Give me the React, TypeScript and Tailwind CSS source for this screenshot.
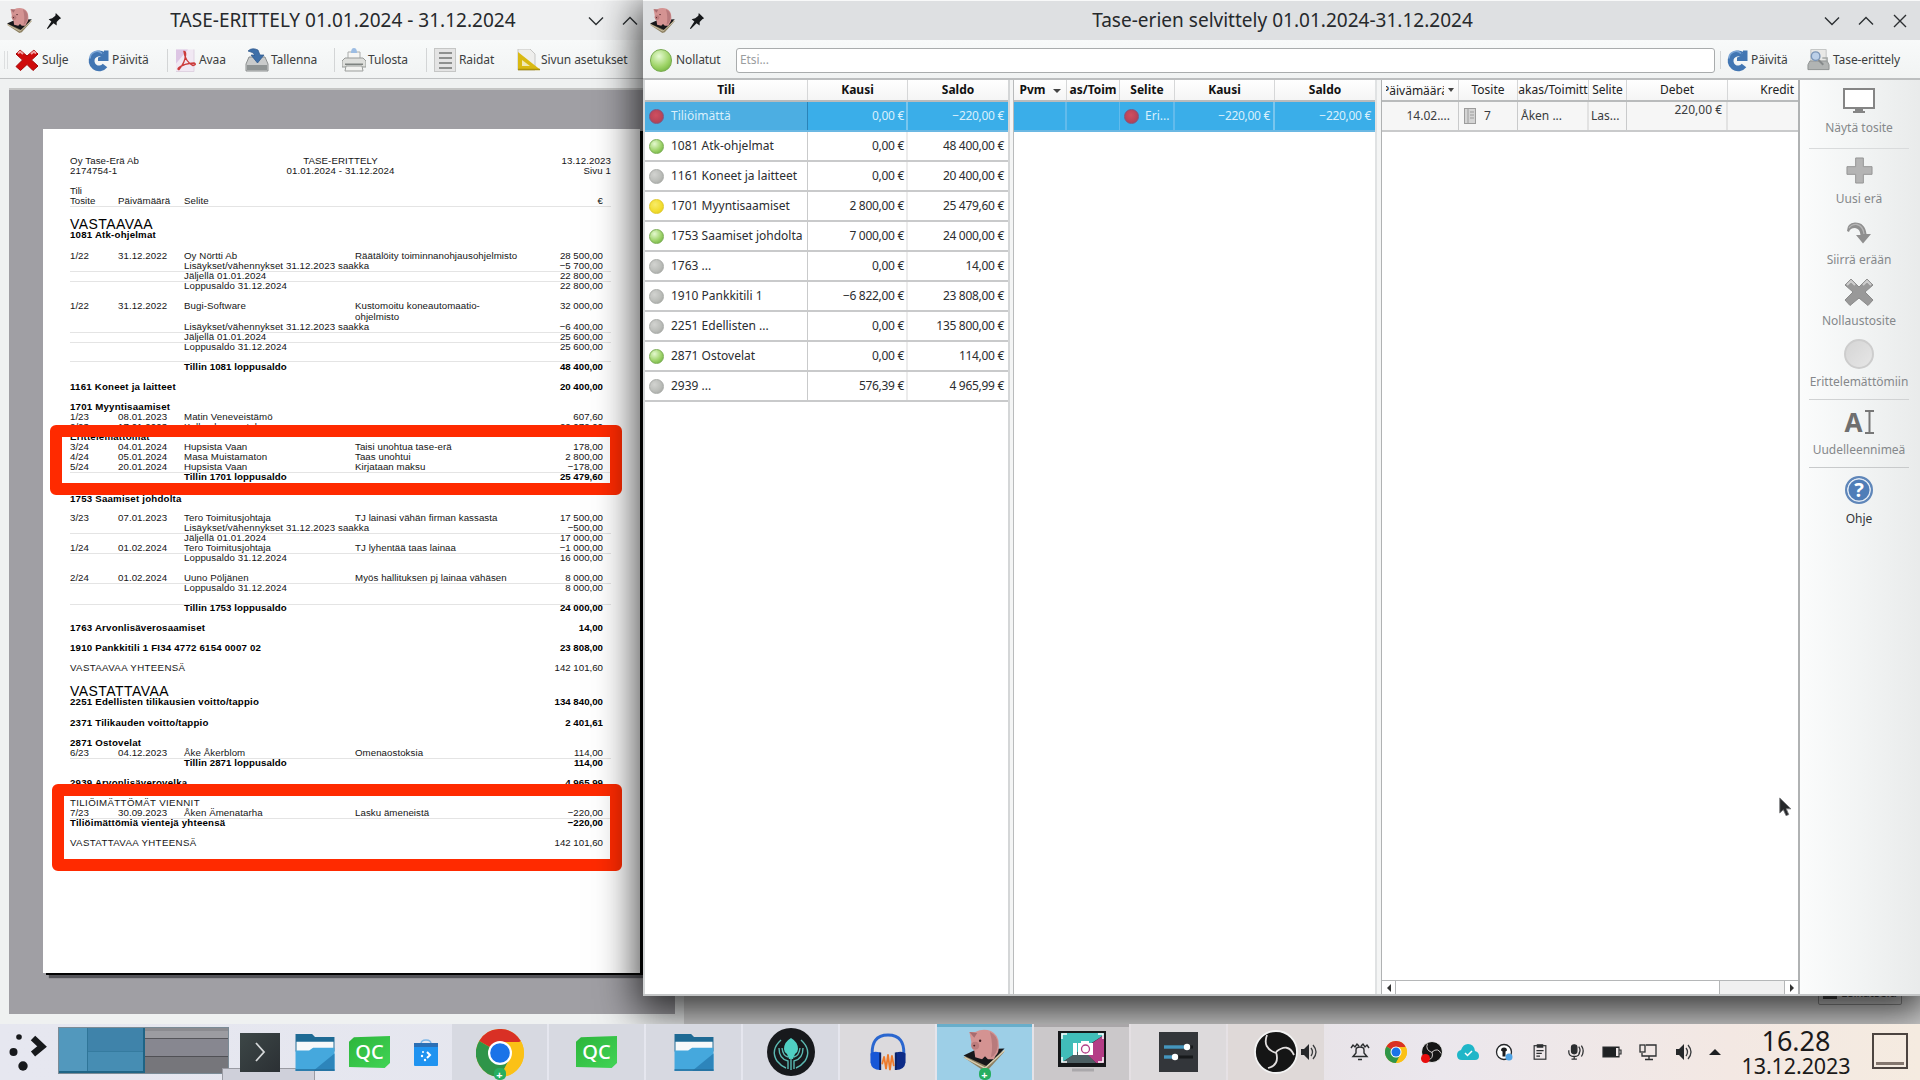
import React from "react";

type Cells = {
  y: number;
  a?: string;
  d?: string;
  s?: string;
  e?: string;
  n?: string;
  bold?: boolean;
  big?: boolean;
  line?: boolean;
};

const LIS = "Lisäykset/vähennykset 31.12.2023 saakka";
const DOC: Cells[] = [
  { y: 191, a: "Tili", },
  { y: 201.5, a: "Tosite", d: "Päivämäärä", s: "Selite", n: "€", line: true },
  { y: 224, a: "VASTAAVAA", big: true },
  { y: 235, a: "1081 Atk-ohjelmat", bold: true },
  { y: 256, a: "1/22", d: "31.12.2022", s: "Oy Nörtti Ab", e: "Räätälöity toiminnanohjausohjelmisto", n: "28 500,00" },
  { y: 266.5, s: LIS, n: "−5 700,00", line: true },
  { y: 276.5, s: "Jäljellä 01.01.2024", n: "22 800,00", line: true },
  { y: 286.5, s: "Loppusaldo 31.12.2024", n: "22 800,00" },
  { y: 306.5, a: "1/22", d: "31.12.2022", s: "Bugi-Software", e: "Kustomoitu koneautomaatio-", n: "32 000,00" },
  { y: 317, e: "ohjelmisto" },
  { y: 327, s: LIS, n: "−6 400,00", line: true },
  { y: 337, s: "Jäljellä 01.01.2024", n: "25 600,00", line: true },
  { y: 347.5, s: "Loppusaldo 31.12.2024", n: "25 600,00" },
  { y: 356.5, line: true },
  { y: 367.5, s: "Tillin 1081 loppusaldo", n: "48 400,00", bold: true },
  { y: 387, a: "1161 Koneet ja laitteet", n: "20 400,00", bold: true },
  { y: 407, a: "1701 Myyntisaamiset", bold: true },
  { y: 417.5, a: "1/23", d: "08.01.2023", s: "Matin Veneveistämö", n: "607,60" },
  { y: 427, a: "2/23", d: "17.01.2023", s: "Kallen kauppatalos", n: "22 072,00" },
  { y: 437, a: "Erittelemättömät", bold: true },
  { y: 447.5, a: "3/24", d: "04.01.2024", s: "Hupsista Vaan", e: "Taisi unohtua tase-erä", n: "178,00" },
  { y: 457.5, a: "4/24", d: "05.01.2024", s: "Masa Muistamaton", e: "Taas unohtui", n: "2 800,00" },
  { y: 467.5, a: "5/24", d: "20.01.2024", s: "Hupsista Vaan", e: "Kirjataan maksu", n: "−178,00", line: true },
  { y: 477.5, s: "Tillin 1701 loppusaldo", n: "25 479,60", bold: true },
  { y: 499, a: "1753 Saamiset johdolta", bold: true },
  { y: 518.5, a: "3/23", d: "07.01.2023", s: "Tero Toimitusjohtaja", e: "TJ lainasi vähän firman kassasta", n: "17 500,00" },
  { y: 528.5, s: LIS, n: "−500,00", line: true },
  { y: 538.5, s: "Jäljellä 01.01.2024", n: "17 000,00" },
  { y: 548.5, a: "1/24", d: "01.02.2024", s: "Tero Toimitusjohtaja", e: "TJ lyhentää taas lainaa", n: "−1 000,00", line: true },
  { y: 558.5, s: "Loppusaldo 31.12.2024", n: "16 000,00" },
  { y: 578, a: "2/24", d: "01.02.2024", s: "Uuno Pöljänen", e: "Myös hallituksen pj lainaa vähäsen", n: "8 000,00", line: true },
  { y: 588.5, s: "Loppusaldo 31.12.2024", n: "8 000,00" },
  { y: 599, line: true },
  { y: 608.5, s: "Tillin 1753 loppusaldo", n: "24 000,00", bold: true },
  { y: 628, a: "1763 Arvonlisäverosaamiset", n: "14,00", bold: true },
  { y: 648.5, a: "1910 Pankkitili 1 FI34 4772 6154 0007 02", n: "23 808,00", bold: true },
  { y: 668.5, a: "VASTAAVAA YHTEENSÄ", n: "142 101,60" },
  { y: 691, a: "VASTATTAVAA", big: true },
  { y: 702.5, a: "2251 Edellisten tilikausien voitto/tappio", n: "134 840,00", bold: true },
  { y: 723.5, a: "2371 Tilikauden voitto/tappio", n: "2 401,61", bold: true },
  { y: 743.5, a: "2871 Ostovelat", bold: true },
  { y: 753.5, a: "6/23", d: "04.12.2023", s: "Åke Åkerblom", e: "Omenaostoksia", n: "114,00", line: true },
  { y: 763.5, s: "Tillin 2871 loppusaldo", n: "114,00", bold: true },
  { y: 783, a: "2939 Arvonlisäverovelka", n: "4 965,99", bold: true },
  { y: 803, a: "TILIÖIMÄTTÖMÄT VIENNIT" },
  { y: 813.5, a: "7/23", d: "30.09.2023", s: "Åken Ämenatarha", e: "Lasku ämeneistä", n: "−220,00", line: true },
  { y: 823.5, a: "Tiliöimättömiä vientejä yhteensä", n: "−220,00", bold: true },
  { y: 843.5, a: "VASTATTAVAA YHTEENSÄ", n: "142 101,60" },
];

function DocRows() {
  let prev = 186;
  return (
    <>
      {DOC.map((r, i) => {
        const h = r.y + 5 - prev;
        prev = r.y + 5;
        const look = r.bold ? "font-bold text-black" : "text-[#151515]";
        const first = r.big
          ? "text-[14px] tracking-[0.45px] text-black"
          : r.bold
            ? "tracking-[0.2px]"
            : r.a && r.a.length > 8
              ? "tracking-[0.36px]"
              : "";
        return (
          <div key={i} className={`flex w-[541px] items-end border-b ${r.line ? "border-[#e4e4e4]" : "border-transparent"}`} style={{ height: h }}>
            <div className={`flex h-[10px] w-[533px] items-center whitespace-nowrap ${look}`}>
              <span className={`w-[48px] shrink-0 ${first}`}>{r.a}</span>
              <span className="w-[66px] shrink-0 tracking-[0.06px]">{r.d}</span>
              <span className="w-[171px] shrink-0 tracking-[0.08px]">{r.s}</span>
              <span className="w-0 grow tracking-[0.06px]">{r.e}</span>
              <span>{r.n}</span>
            </div>
          </div>
        );
      })}
    </>
  );
}

function Piggy({ c }: { c: string }) {
  return (
    <svg viewBox="0 0 44 44" className={c}>
      <path d="M0 29 L14 24 L42 23 L25 42 L21 43 Z" fill="#8d8062" />
      <path d="M0 27 L13 21 L42 20 L24 38 Z" fill="#17171a" />
      <path d="M1 29 L22 40 L42 22" fill="none" stroke="#d8cdb0" strokeWidth="1.4" />
      <path d="M6 3 L12 3 Q20 -1 28 2 Q36 6 36 15 Q37 23 33 27 L31 31 L25 31 L22 28 L19 31 L12 29 L11 22 Q7 19 8 13 Z" fill="#d49392" />
      <path d="M27 3 Q36 7 35 17 Q34 27 28 29 Q31 17 27 3Z" fill="#b87a7c" />
      <ellipse cx="12" cy="17" rx="4" ry="4" fill="#bd7d7d" />
      <circle cx="11" cy="17" r="1" fill="#4a2226" />
      <circle cx="17" cy="12" r="1.2" fill="#39191e" />
      <path d="M6 3 L14 4 L11 9Z" fill="#a76c70" />
    </svg>
  );
}

function Pin() {
  return (
    <svg viewBox="0 0 16 18" className="h-[16px] w-[16px]">
      <path d="M10 0 L16 6 L14 7 L11 10 L11 14 L7.5 11.5 L1 18 L0 17.5 L5 9.5 L2 7 L6 6 L9.5 3Z" fill="#16181a" />
    </svg>
  );
}

function Chev({ up, x }: { up?: boolean; x?: boolean }) {
  return (
    <svg viewBox="0 0 16 16" className="h-4 w-4" fill="none" stroke="#2c2f32" strokeWidth="1.4">
      {x ? <path d="M2 2L14 14M14 2L2 14" /> : up ? <path d="M1 11.5L8 4.5L15 11.5" /> : <path d="M1 4.5L8 11.5L15 4.5" />}
    </svg>
  );
}

function RedX() {
  return (
    <svg viewBox="0 0 24 22" className="h-[22px] w-[24px]">
      <path d="M5 1 L12 7 L19 1 L23 5 L16.5 11 L23 17 L18 21.500 L12 15.500 L5.500 21.500 L1 17.500 L7.500 11 L1 5Z" fill="#cf0a0a" stroke="#a30505" strokeLinejoin="round" />
      <path d="M3 4.500 L5 2.500 L8 5 M16 5 L19 2.500 L21 4.500" stroke="#f0a0a0" strokeWidth="2" fill="none" />
    </svg>
  );
}

function Refresh() {
  return (
    <svg viewBox="0 0 22 22" className="h-[23px] w-[22px] shrink-0">
      <path d="M16 5 A7.500 7.500 0 1 0 18 16" fill="none" stroke="#4276b3" strokeWidth="5.800" />
      <path d="M21.500 1 V11.500 H11 V8 L14 7 L17 3 V1Z" fill="#4276b3" />
      <path d="M15 4 A7 7 0 0 0 3 9" fill="none" stroke="#7ba5d6" strokeWidth="1.6" />
    </svg>
  );
}

function Pdf() {
  return (
    <svg viewBox="0 0 20 22" className="h-[23px] w-[20px]">
      <path d="M0 0H18V22H0Z" fill="#f1e8f3" />
      <path d="M0 0H12L0 14Z" fill="#ddc6e4" />
      <path d="M18 0V22H0" fill="none" stroke="#dfd3e1" />
      <path d="M8 2 Q10 2 9.500 6 Q9 13 3 20 Q1 20 3 18 Q8 14 18 13.500 Q21 15 17 16 Q9 12 8 2Z" fill="none" stroke="#cc3b3b" strokeWidth="1.4" />
    </svg>
  );
}

function SaveIcon() {
  return (
    <svg viewBox="0 0 24 24" className="h-[24px] w-[24px]">
      <path d="M4 9H20L23 16V23H1V16Z" fill="#c9cbcb" stroke="#8b8f8f" />
      <rect x="2" y="17" width="20" height="5" fill="#8f9494" />
      <path d="M3 3 Q7 -1 13 2 L15 7 H19 L12.500 15 L6 7 H10 Q8 4 3 3Z" fill="#3e6fa8" stroke="#2d5689" strokeWidth=".7" />
    </svg>
  );
}

function PrinterIcon() {
  return (
    <svg viewBox="0 0 24 24" className="h-[24px] w-[24px]">
      <path d="M6 4H18V12H6Z" fill="#f6f6f4" stroke="#a9acab" />
      <path d="M9 5Q9 0 12 0T15 5Z" fill="#9dbde3" />
      <path d="M3 10H21L24 13V19H0V13Z" fill="#dedfdc" stroke="#979a98" />
      <path d="M3 15.500H21V17H3Z" fill="#7e8280" />
      <path d="M4 18H20L21 23H3Z" fill="#f2f2f0" stroke="#9b9e9c" />
    </svg>
  );
}

function Stripes() {
  return (
    <svg viewBox="0 0 22 24" className="h-[24px] w-[22px]">
      <rect x=".5" y=".5" width="21" height="23" fill="#e4e4e4" stroke="#c5c6c5" />
      <path d="M5 5H18M5 10H18M5 15H18M5 20H18" stroke="#8e908f" strokeWidth="2.200" />
    </svg>
  );
}

function Ruler() {
  return (
    <svg viewBox="0 0 23 22" className="h-[22px] w-[23px]">
      <path d="M1 0H13L18 5V21H1Z" fill="#eeeeec" stroke="#c6c6c4" />
      <path d="M1 3 L23 20.500 H1Z" fill="#d9b912" />
      <path d="M5 11 L13 17 H5Z" fill="#f0e9b4" />
      <path d="M1 20.500H23" stroke="#ad920a" strokeWidth="1.500" />
    </svg>
  );
}

function DiskSearch() {
  return (
    <svg viewBox="0 0 24 22" className="h-[22px] w-[23px] shrink-0">
      <path d="M4 0H20V14H4Z" fill="#e8e8e6" stroke="#c0c2c1" />
      <path d="M3 12H21L23 16V21H1V16Z" fill="#b1b4b3" stroke="#8d9190" />
      <circle cx="9" cy="7" r="4.500" fill="#bcd0e8" stroke="#7d97b8" strokeWidth="1.500" />
      <path d="M12 11L17 16" stroke="#85898a" strokeWidth="2" />
      <path d="M16 9H21V14" stroke="#a2a6a5" fill="none" strokeWidth="1.500" />
    </svg>
  );
}

const BALL: Record<string, string> = {
  green: "bg-[radial-gradient(circle_at_35%_30%,#e4f8cf,#a4d672_50%,#62a92f)] border-[#7cae55]",
  grey: "bg-[radial-gradient(circle_at_35%_35%,#d2d3d0,#bbbdb9_55%,#9fa19e)] border-[#a9aba8]",
  yellow: "bg-[radial-gradient(circle_at_40%_35%,#f8ec6a,#f1dc2c_60%,#dcc41c)] border-[#dfc92b]",
  red: "bg-[radial-gradient(circle_at_45%_40%,#cf4f60,#b84458_60%,#8e4566)] border-[#87527a]",
};

function Ball({ c }: { c: string }) {
  return <span className={`inline-block h-[15px] w-[15px] shrink-0 rounded-full border ${BALL[c]}`} />;
}

function TitleBar({ title, active }: { title: string; active?: boolean }) {
  return (
    <div className={`flex h-10 shrink-0 items-center border-t border-[#f8f9f9] ${active ? "bg-[#dee0e2] pl-[7px] pr-[12px]" : "bg-[#eff0f1] pl-[7px] pr-[12px]"}`}>
      <Piggy c="h-[27px] w-[26px] shrink-0" />
      <div className="ml-[13px]"><Pin /></div>
      <div className={`grow whitespace-nowrap text-center text-[19.05px] text-[#26292c] ${active ? "pl-[36px]" : "pl-[36px]"}`}>{title}</div>
      <div className="flex items-center gap-[18px]">
        <Chev /><Chev up />{active ? <Chev x /> : <span className="w-[16px]" />}
      </div>
    </div>
  );
}

function Tool({ icon, label, c }: { icon: React.ReactNode; label: string; c: string }) {
  return (
    <div className={`flex shrink-0 items-center gap-[3px] whitespace-nowrap ${c}`}>
      {icon}<span>{label}</span>
    </div>
  );
}

function LeftWindow() {
  return (
    <div className="relative flex h-[1024px] w-[684px] flex-col bg-[#eff1f1]">
      <TitleBar title="TASE-ERITTELY 01.01.2024 - 31.12.2024" />
      <div className="flex h-[39px] shrink-0 items-center border-b border-[#bfc1c2] bg-gradient-to-b from-[#f8fafa] to-[#f1f3f3] pl-1 pt-[2px] text-[12px] tracking-[-0.1px] text-[#3c3e40]">
        <div className="h-[18px] w-[4px] border-x border-[#dcdedf]" />
        <Tool icon={<RedX />} label="Sulje" c="w-[71px] pl-[7px]" />
        <Tool icon={<Refresh />} label="Päivitä" c="w-[88px] pl-[8px]" />
        <Tool icon={<Pdf />} label="Avaa" c="w-[69px] border-l border-[#d3d5d6] pl-[8px]" />
        <Tool icon={<SaveIcon />} label="Tallenna" c="w-[98px] pl-[9px] !gap-[2px]" />
        <Tool icon={<PrinterIcon />} label="Tulosta" c="w-[92px] border-l border-[#d3d5d6] pl-[7px] !gap-[2px]" />
        <Tool icon={<Stripes />} label="Raidat" c="w-[80px] border-l border-[#d3d5d6] pl-[7px]" />
        <Tool icon={<Ruler />} label="Sivun asetukset" c="pl-[11px] !gap-[1px]" />
      </div>
      <div className="ml-[9px] mt-[9px] h-[926px] w-[666px] border-t-2 border-[#c4c5c4] bg-[#a09fa4] pl-[34px] pt-[39px]">
        <div className="h-[844px] w-[597px] bg-white pl-[27px] pt-[27px] font-['Liberation_Sans'] text-[9.7px] leading-[10px] shadow-[3px_2px_0_#050505,6px_5px_1px_#55555a]">
          <div className="flex h-[21px] w-[541px] justify-between whitespace-pre text-[#151515]">
            <div className="w-[180px] tracking-[0.1px]">{"Oy Tase-Erä Ab\n2174754-1"}</div>
            <div className="text-center tracking-[0.1px]">{"TASE-ERITTELY\n01.01.2024 - 31.12.2024"}</div>
            <div className="w-[180px] text-right tracking-[0.1px]">{"13.12.2023\nSivu 1"}</div>
          </div>
          <div className="pt-[9.500px]"><DocRows /></div>
        </div>
      </div>
      <div className="absolute left-[50px] top-[425px] h-[70px] w-[572px] rounded-[6px] border-[12px] border-[#ff2a00]" />
      <div className="absolute left-[52px] top-[784px] h-[87px] w-[570px] rounded-[6px] border-[12px] border-[#ff2a00]" />
    </div>
  );
}

const ACC = [
  ["red", "Tiliöimättä", "0,00 €", "−220,00 €"],
  ["green", "1081 Atk-ohjelmat", "0,00 €", "48 400,00 €"],
  ["grey", "1161 Koneet ja laitteet", "0,00 €", "20 400,00 €"],
  ["yellow", "1701 Myyntisaamiset", "2 800,00 €", "25 479,60 €"],
  ["green", "1753 Saamiset johdolta", "7 000,00 €", "24 000,00 €"],
  ["grey", "1763 ...", "0,00 €", "14,00 €"],
  ["grey", "1910 Pankkitili 1", "−6 822,00 €", "23 808,00 €"],
  ["grey", "2251 Edellisten ...", "0,00 €", "135 800,00 €"],
  ["green", "2871 Ostovelat", "0,00 €", "114,00 €"],
  ["grey", "2939 ...", "576,39 €", "4 965,99 €"],
];

const HEAD = "grid h-[22px] shrink-0 items-end border-b-2 border-[#b9bbbc] bg-gradient-to-b from-white to-[#f5f5f5] text-center text-[12px] leading-[19px]";
const HC = "h-[20px] overflow-hidden whitespace-nowrap border-r border-[#d6d7d8]";

function AccountTable() {
  return (
    <div className="flex w-[365px] shrink-0 flex-col border-l-2 border-[#d4d6d7] bg-white">
      <div className={`${HEAD} grid-cols-[163px_100px_100px] font-bold text-[#111]`}>
        <div className={HC}>Tili</div><div className={HC}>Kausi</div><div className="h-[20px]">Saldo</div>
      </div>
      {ACC.map((r, i) => (
        <div key={i} className={`grid h-[30px] shrink-0 grid-cols-[163px_100px_100px] items-stretch whitespace-nowrap border-b-2 text-[12px] leading-[28px] ${i === 0 ? "border-[#6bb8e3] bg-[#3aaee9] text-[#d9f0fc]" : "border-[#c9cacb] text-[#2b2d30]"}`}>
          <div className={`flex items-center gap-[7px] border-r pl-[4px] ${i === 0 ? "border-[#2a83b8] bg-[#4caee2]" : "border-[#c9cacb]"}`}><Ball c={r[0]} />{r[1]}</div>
          <div className={`border-r-2 pr-[2px] text-right tracking-[-0.3px] ${i === 0 ? "border-[#79c6ee]" : "border-[#ececec]"}`}>{r[2]}</div>
          <div className="pr-[4px] text-right tracking-[-0.3px]">{r[3]}</div>
        </div>
      ))}
    </div>
  );
}

function ItemTable() {
  const cols = "grid-cols-[53px_53px_55px_100px_100px]";
  return (
    <div className="flex w-[362px] shrink-0 flex-col border-l border-[#b9bbbc] bg-white">
      <div className={`${HEAD} ${cols} font-bold text-[#111]`}>
        <div className={HC}>Pvm <span className="ml-1 inline-block border-x-[4px] border-t-[4px] border-x-transparent border-t-[#444] align-middle" /></div>
        <div className={HC}>as/Toim</div><div className={HC}>Selite</div><div className={HC}>Kausi</div><div className="h-[20px]">Saldo</div>
      </div>
      <div className={`grid h-[30px] ${cols} whitespace-nowrap border-b-2 border-[#6bb8e3] bg-[#3aaee9] text-[12px] leading-[28px] text-[#d9f0fc]`}>
        <div className="border-r-2 border-[#62bbec]" /><div className="border-r border-[#62bbec]" />
        <div className="flex items-center gap-[6px] border-r-2 border-[#62bbec] pl-[4px]"><Ball c="red" />Eri...</div>
        <div className="border-r-2 border-[#79c6ee] pr-[3px] text-right tracking-[-0.3px]">−220,00 €</div>
        <div className="pr-[4px] text-right tracking-[-0.3px]">−220,00 €</div>
      </div>
    </div>
  );
}

function EntryTable() {
  const cols = "grid-cols-[77px_59px_71px_38px_101px_71px]";
  return (
    <div className="flex w-[419px] shrink-0 flex-col border-l border-r-2 border-[#b0b2b3] bg-white">
      <div className={`${HEAD} ${cols} text-[#222]`}>
        <div className={`${HC} flex items-center justify-center gap-1`}>
          <span className="flex w-[58px] justify-center overflow-hidden">Päivämäärä</span><span className="border-x-[3.500px] border-t-[4px] border-x-transparent border-t-[#444]" />
        </div>
        <div className={HC}>Tosite</div>
        <div className={`${HC} flex justify-center`}><span>akas/Toimitt</span></div>
        <div className={HC}>Selite</div><div className={HC}>Debet</div><div className="h-[20px] pr-[5px] text-right">Kredit</div>
      </div>
      <div className={`grid h-[30px] ${cols} whitespace-nowrap border-b-2 border-[#c9cacb] bg-[#f6f6f6] text-[12px] leading-[28px] text-[#3a3c3e]`}>
        <div className="border-r border-[#c9cacb] pr-[8px] text-right">14.02....</div>
        <div className="flex items-center gap-[8px] border-r border-[#c9cacb] pl-[5px]">
          <svg viewBox="0 0 12 16" className="h-[16px] w-[12px]"><rect x=".5" y=".5" width="11" height="15" fill="#d4d4d4" stroke="#9c9c9c" /><path d="M4 1V15M6 4H10M6 7H10M6 10H10" stroke="#9c9c9c" /></svg>7
        </div>
        <div className="border-r-2 border-[#e2e2e2] pl-[3px]">Åken ...</div>
        <div className="border-r border-[#c9cacb] pl-[2px]">Las...</div>
        <div className="border-r-2 border-[#e2e2e2] pr-[4px] text-right leading-[15px]">220,00 €</div>
        <div />
      </div>
      <div className="grow" />
      <div className="flex h-[14px] shrink-0 items-stretch border-t border-[#b5b7b8]">
        <div className="flex w-[14px] items-center justify-center border-r border-[#b5b7b8]"><span className="border-y-[4px] border-r-[4px] border-y-transparent border-r-[#333]" /></div>
        <div className="grow border-r border-[#b5b7b8]" />
        <div className="w-[65px] border-r border-[#b5b7b8] bg-[#f0f0f0]" />
        <div className="flex w-[13px] items-center justify-center"><span className="border-y-[4px] border-l-[4px] border-y-transparent border-l-[#333]" /></div>
      </div>
    </div>
  );
}

function SideItem({ icon, label, h, dark }: { icon: React.ReactNode; label: string; h: string; dark?: boolean }) {
  return (
    <div className={`flex w-full flex-col items-center justify-end text-[12px] leading-[16px] ${h} ${dark ? "text-[#33363a]" : "text-[#85888b]"}`}>
      <div className="flex grow items-center">{icon}</div>
      <span className="whitespace-nowrap">{label}</span>
    </div>
  );
}

function Sidebar() {
  return (
    <div className="flex w-[120px] shrink-0 flex-col items-center bg-gradient-to-r from-[#fbfcfc] via-[#f2f4f4] to-[#e9ebeb] pr-[2px]">
      <SideItem h="h-[56px]" label="Näytä tosite" icon={
        <svg viewBox="0 0 32 25" className="h-[25px] w-[32px]"><rect x="1" y="1" width="30" height="19" fill="#fff" stroke="#858585" strokeWidth="2" /><path d="M12 21H20V23H22V25H10V23H12Z" fill="#858585" /></svg>} />
      <div className="mt-[12px] h-px w-[100px] bg-[#d9dbdc]" />
      <SideItem h="h-[58px]" label="Uusi erä" icon={
        <svg viewBox="0 0 28 28" className="h-[27px] w-[27px]"><path d="M10 1H18V10H27V18H18V27H10V18H1V10H10Z" fill="#b4b4b4" stroke="#949494" /></svg>} />
      <SideItem h="h-[61px]" label="Siirrä erään" icon={
        <svg viewBox="0 0 26 22" className="mt-[6px] h-[22px] w-[26px]"><path d="M1 9Q1 1 9 0.500Q19 0.500 20.500 12H25L17 21.500L10 13H14.500Q14 6.500 9 6Q4 6 3 10Z" fill="#8f8f8f" /><path d="M3 6Q6 2 11 2.500Q17 4 18 12" fill="none" stroke="#b5b5b5" strokeWidth="1.300" /></svg>} />
      <SideItem h="h-[61px]" label="Nollaustosite" icon={
        <svg viewBox="0 0 30 28" className="mt-[3px] h-[28px] w-[30px]"><path d="M7 1L15 9L23 1L29 7L21 14L29 22L24 27.500L15 20L6 27.500L1 22L9 14L1 7Z" fill="#999" stroke="#8a8a8a" strokeLinejoin="round" /><path d="M3 7L7 3L11 7M19 7L23 3L27 7" stroke="#cdcdcd" fill="none" strokeWidth="2" /></svg>} />
      <SideItem h="h-[61px]" label="Erittelemättömiin" icon={<span className="mt-[4px] h-[30px] w-[30px] rounded-full border-2 border-[#cdcdcd] bg-gradient-to-br from-[#d5d5d5] to-[#e6e6e6]" />} />
      <div className="mt-[9px] h-px w-[100px] bg-[#d0d2d3]" />
      <SideItem h="h-[58px]" label="Uudelleennimeä" icon={
        <div className="flex items-center gap-[2px] pt-[2px] text-[#6f6f6f]"><span className="text-[26px] font-bold leading-[24px]">A</span><svg viewBox="0 0 9 24" className="h-[24px] w-[9px]"><path d="M0 1H9M4.500 1V23M0 23H9" stroke="#777" strokeWidth="2" /></svg></div>} />
      <div className="mt-[9px] h-px w-[100px] bg-[#c8cacb]" />
      <SideItem dark h="h-[59px]" label="Ohje" icon={<span className="flex h-[28px] w-[28px] items-center justify-center rounded-full border-2 border-[#5f86b9] bg-[#4f7db8] text-[20px] font-bold text-white shadow-[inset_0_0_0_1.500px_#dfe8f3]">?</span>} />
    </div>
  );
}

function RightWindow() {
  return (
    <div className="absolute left-[643px] top-0 flex h-[996px] w-[1277px] flex-col bg-[#eff1f1] shadow-[0_10px_38px_6px_rgba(0,0,0,0.75)]">
      <TitleBar active title="Tase-erien selvittely 01.01.2024-31.12.2024" />
      <div className="flex h-[40px] shrink-0 items-center border-b-2 border-[#bcbebf] bg-gradient-to-b from-[#f8fafa] to-[#f1f3f3] pl-[7px] pt-[2px] text-[12px] tracking-[-0.1px] text-[#3c3e40]">
        <span className="mr-1 h-[23px] w-[22px] shrink-0 rounded-full border border-[#79ab52] bg-[radial-gradient(circle_at_40%_30%,#e6fad2,#9fd468_55%,#62a92f)]" />
        <span className="w-[60px] shrink-0">Nollatut</span>
        <div className="h-[25px] w-[979px] shrink-0 rounded-[3px] border border-[#a9acad] bg-white pl-[3px] leading-[22px] text-[#9b9d9f]">Etsi...</div>
        <div className="ml-[5px] h-[18px] w-px bg-[#d3d5d6]" />
        <Tool icon={<Refresh />} label="Päivitä" c="w-[86px] pl-[5px]" />
        <Tool icon={<DiskSearch />} label="Tase-erittely" c="" />
      </div>
      <div className="flex grow border-b-2 border-[#c3c5c6]">
        <AccountTable />
        <div className="w-[5px] shrink-0 border-l-2 border-[#d4d6d7] bg-[#f4f5f5]" />
        <ItemTable />
        <div className="w-[6px] shrink-0 border-l-2 border-[#e0e2e3] bg-[#f4f5f5]" />
        <EntryTable />
        <Sidebar />
      </div>
    </div>
  );
}

function ChromeLogo({ c }: { c: string }) {
  return (
    <svg viewBox="0 0 48 48" className={c}>
      <circle cx="24" cy="24" r="24" fill="#fbc116" />
      <path d="M24 24L3.200 12A24 24 0 0 1 44.800 12Z" fill="#d93025" />
      <path d="M24 24L3.200 12A24 24 0 0 0 24 48L34 30Z" fill="#2f9549" />
      <path d="M24 13H45.300A24 24 0 0 1 24 48L33.500 29.500Z" fill="#fbc116" />
      <circle cx="24" cy="24" r="12" fill="#fff" />
      <circle cx="24" cy="24" r="9.800" fill="#1a73e8" />
    </svg>
  );
}

function Folder() {
  return (
    <svg viewBox="0 0 40 38" className="h-[37px] w-[40px]">
      <path d="M0 0H17L20 3H40V18H0Z" fill="#1e6a94" />
      <path d="M1 8H39V20H1Z" fill="#f7f9fa" />
      <path d="M0 17H14L18 14H40V38H0Z" fill="#45a8dd" />
      <path d="M40 20V38H18Z" fill="#2d85bb" />
      <path d="M0 37H40" stroke="#256f9c" strokeWidth="1.500" />
    </svg>
  );
}

function QC() {
  return (
    <span className="flex h-[32px] w-[41px] items-center justify-center bg-gradient-to-br from-[#2cb53b] to-[#41d455] font-['Noto_Sans'] text-[20px] font-medium text-white [clip-path:polygon(12%_4%,100%_0,100%_84%,87%_100%,0_97%,0_18%)]">QC</span>
  );
}

function Obs({ c }: { c: string }) {
  return (
    <svg viewBox="0 0 44 44" className={c}>
      <circle cx="22" cy="22" r="21" fill="#151515" stroke="#f3f3f3" strokeWidth="1.800" />
      <path d="M22 23Q8 18 13 5M22 22Q34 12 40 25M22 22Q26 35 14 38" fill="none" stroke="#e2dede" strokeWidth="1.800" />
    </svg>
  );
}

function Speaker({ c }: { c: string }) {
  return (
    <svg viewBox="0 0 18 18" className={c}>
      <path d="M1 6H4L9 1V17L4 12H1Z" fill="#26282a" />
      <path d="M11 5Q14 9 11 13M13 2Q19 9 13 16" fill="none" stroke="#3a3c3e" strokeWidth="1.300" />
    </svg>
  );
}

function Badge() {
  return <span className="absolute bottom-0 left-1/2 flex h-[12px] w-[12px] -translate-x-1/2 items-center justify-center rounded-[5px] bg-[#27ae60] text-[11px] font-bold leading-none text-white">+</span>;
}

function Task({ children, c }: { children: React.ReactNode; c: string }) {
  return <div className={`relative flex h-full w-[95px] shrink-0 items-center justify-center border-t-[3px] ${c}`}>{children}</div>;
}

function Kraken() {
  return (
    <svg viewBox="0 0 48 48" className="h-[48px] w-[48px]">
      <circle cx="24" cy="24" r="24" fill="#17191c" />
      <path d="M24 10Q31 14 31 21Q31 24 28 26L26 31H22L20 26Q17 24 17 21Q17 14 24 10Z" fill="#4fcfc3" />
      <path d="M14 12Q3 22 10 33Q14 38 19 40M34 12Q45 22 38 33Q34 38 29 40M12 20Q12 31 21 33V41M36 20Q36 31 27 33V41M15 20Q16 28 21 29M33 20Q32 28 27 29M24 30V42" fill="none" stroke="#5bb9b2" strokeWidth="1.400" />
    </svg>
  );
}

function Audacity() {
  return (
    <svg viewBox="0 0 36 40" className="h-[39px] w-[36px]">
      <path d="M2 24Q0 2 18 2T34 24" fill="none" stroke="#2a66cf" strokeWidth="3" />
      <path d="M0 21Q3 18 10 20V38Q1 38 0 30Z" fill="#1757d6" /><path d="M36 21Q33 18 26 20V38Q35 38 36 30Z" fill="#0d2b87" />
      <path d="M10 20V38M26 20V38" stroke="#0a2266" strokeWidth="2" />
      <path d="M12 32L14 24L16 37L18 22L20 38L22 23L24 34" fill="none" stroke="#ee7a2b" strokeWidth="1.800" />
    </svg>
  );
}

function Spectacle() {
  return (
    <svg viewBox="0 0 48 42" className="-mt-[4px] h-[42px] w-[48px]">
      <rect width="48" height="36" fill="#16181a" />
      <path d="M3 2H46V4L3 32Z" fill="#41bdb9" /><path d="M46 4V32H38L24 19Z" fill="#b43d86" /><path d="M3 32L24 18L38 32Z" fill="#4d5f63" />
      <path d="M4 8V3H9M40 3H45V8M4 26V31H9M40 31H45V26" fill="none" stroke="#fff" strokeWidth="1.500" />
      <path d="M15 12H19V24H15ZM20 12H23V10H31V12H35V24H20Z" fill="#fff" /><circle cx="27.500" cy="18" r="4" fill="#fff" stroke="#b43d86" strokeWidth="1.300" />
      <path d="M14 39H36" stroke="#aaa8ab" strokeWidth="3" />
    </svg>
  );
}

function Taskbar() {
  const idle = "border-transparent bg-[#d7d9e1]";
  return (
    <div className="relative flex h-[56px] w-full items-stretch bg-[linear-gradient(90deg,#e6e7f0_0%,#e5e6ee_45%,#e4dfe2_60%,#ebe7ed_75%,#f3e8e3_90%,#f5ebe0_100%)]">
      <div className="flex w-[58px] shrink-0 items-center pl-[9px]">
        <svg viewBox="0 0 38 38" className="h-[38px] w-[38px]" fill="#17191c"><circle cx="10" cy="4" r="2.800" /><circle cx="4.500" cy="19" r="4" /><circle cx="14" cy="33" r="4.700" /><path d="M24 5L33 13.500L24 21" fill="none" stroke="#17191c" strokeWidth="6.500" /></svg>
      </div>
      <div className="mt-[3px] flex h-[47px] w-[171px] shrink-0 border border-[#7b8b96]">
        <div className="flex w-[86px] border-b-2 border-r-2 border-[#1f6485] bg-[#468db3]">
          <div className="w-[29px] border-r border-[#2f7598] bg-[#5298bd]" />
          <div className="grow"><div className="h-[24px] border-b border-[#357b9f] bg-[#3f83aa]" /></div>
        </div>
        <div className="flex grow flex-col bg-[#76767b]"><div className="h-[3px] bg-[#8b8b90]" /><div className="h-[8px] border-b border-[#55555a] bg-[#9c9ca1]" /><div className="h-[18px] border-b border-[#505055] bg-[#878790]" /></div>
      </div>
      <div className="absolute left-[222px] top-[44px] h-[12px] w-[93px] border border-b-0 border-[#9a9ba3] bg-[#cfd0da]" />
      <div className="relative flex shrink-0 items-center pl-[11px]">
        <div className="flex h-[39px] w-[40px] items-center justify-center bg-gradient-to-br from-[#3d4747] to-[#2b3034]"><svg viewBox="0 0 12 20" className="h-[20px] w-[12px]"><path d="M2 1L10 10L2 19" fill="none" stroke="#d5d8d9" strokeWidth="1.800" /></svg></div>
        <div className="ml-[15px]"><Folder /></div>
        <div className="ml-[14px]"><QC /></div>
        <svg viewBox="0 0 24 27" className="ml-[24px] h-[27px] w-[24px]"><path d="M7 5Q7 1 12 1T17 5" fill="none" stroke="#7fb7e8" strokeWidth="1.500" /><rect y="4" width="24" height="23" rx="1" fill="#1f93f0" /><rect y="4" width="24" height="4" fill="#2b6fb5" /><path d="M13 13L16 16L13 19" fill="none" stroke="#fff" strokeWidth="2" /><circle cx="8" cy="17" r="1.200" fill="#fff" /><circle cx="11" cy="21" r="1.200" fill="#fff" /><circle cx="9" cy="13" r="1" fill="#fff" /></svg>
      </div>
      <div className="ml-[14px] flex shrink-0 gap-[2px]">
        <Task c={idle}><ChromeLogo c="h-[48px] w-[48px] -mt-[2px]" /><Badge /></Task>
        <Task c={idle}><div className="mb-[3px]"><QC /></div></Task>
        <Task c={idle}><div className="mb-[3px]"><Folder /></div></Task>
        <Task c={idle}><div className="mb-[3px]"><Kraken /></div></Task>
        <Task c="border-transparent bg-[#dcdadd]"><div className="mb-[3px]"><Audacity /></div></Task>
        <Task c="border-[#68aecb] bg-[#9dcfe7]"><div className="mb-[6px]"><Piggy c="h-[43px] w-[44px]" /></div><Badge /></Task>
        <Task c="border-[#a9a6a8] bg-[#cbc8ca]"><Spectacle /></Task>
        <Task c="border-transparent bg-[#dddadc]">
          <svg viewBox="0 0 39 40" className="mb-[3px] h-[40px] w-[39px]"><rect width="39" height="40" fill="#33363a" /><path d="M5 15H34M5 25H34" stroke="#17191b" strokeWidth="3" /><path d="M5 15H28M5 25H15" stroke="#4595bd" strokeWidth="3.500" /><circle cx="28" cy="15" r="3.200" fill="#fff" /><circle cx="16" cy="25" r="3.200" fill="#fff" /></svg>
        </Task>
        <div className="relative flex h-full w-[96px] items-center bg-[#dfd9d8] pl-[26px]"><Obs c="h-[44px] w-[44px]" /><Speaker c="ml-[2px] h-[18px] w-[18px]" /></div>
      </div>
      <div className="flex items-center gap-[14px] pl-[25px]">
        <svg viewBox="0 0 22 20" className="h-[20px] w-[22px]" fill="none" stroke="#2a2c2e" strokeWidth="1.400"><path d="M4 14.500H18L15 11V8Q15 5 11 5T7 8V11ZM2 6L4 3L6 5L8 2L10 4M20 6L18 3L16 5L14 2L12 4M9 17.500H13" /></svg>
        <ChromeLogo c="h-[22px] w-[22px]" />
        <div className="relative flex h-[22px] w-[22px]"><Obs c="h-[22px] w-[22px]" /><span className="absolute bottom-0 left-0 h-[9px] w-[9px] rounded-full bg-[#e80d0d]" /></div>
        <svg viewBox="0 0 22 16" className="h-[16px] w-[22px]"><path d="M5 16Q0 16 0 11Q0 7 4 6Q6 0 11 0Q17 0 18 7Q22 8 22 12Q22 16 18 16Z" fill="#1fb6c8" /><path d="M8 9L10.500 11.500L15 7" fill="none" stroke="#fff" strokeWidth="1.500" /></svg>
        <svg viewBox="0 0 22 20" className="h-[20px] w-[22px]"><circle cx="11" cy="10" r="7.500" fill="#fff" stroke="#25272a" strokeWidth="1.300" /><path d="M8 8.500A3 3 0 1 1 14 8.500L12.500 9.500V14.500H9.500V9.500Z" fill="#1c1e20" /><circle cx="16" cy="15" r="3.500" fill="#4fa4e6" /></svg>
        <svg viewBox="0 0 22 20" className="h-[18px] w-[22px]" fill="none" stroke="#2c2e30" strokeWidth="1.300"><rect x="4.500" y="3" width="13" height="15" /><path d="M7 8.500H15M7 11.500H13M7 14.500H11" /><path d="M8 2H14V4.500H8Z" fill="#2c2e30" /></svg>
        <svg viewBox="0 0 22 20" className="h-[18px] w-[22px]" fill="none" stroke="#2c2e30" strokeWidth="1.400"><rect x="6" y="2" width="6" height="10" rx="3" fill="#2c2e30" /><path d="M3 8V10Q3 15 9 15T15 10M9 15V18M6 18H12M14 4Q17 8 14 12M17 3Q21 9 17 15" /></svg>
        <svg viewBox="0 0 22 20" className="h-[20px] w-[22px]"><rect x="2" y="5" width="16" height="10" fill="#1f2123" /><rect x="15" y="6" width="3" height="8" fill="#f1eaea" /><path d="M2 5H18V15H2ZM18 8H20V12H18" fill="none" stroke="#2c2e30" strokeWidth="1.200" /></svg>
        <svg viewBox="0 0 22 20" className="h-[20px] w-[22px]" fill="none" stroke="#2c2e30" strokeWidth="1.300"><path d="M9 3H19V14H5V11M8 17.500H16M12 14V17" /><rect x="3" y="3" width="5" height="7" /></svg>
        <Speaker c="h-[18px] w-[22px]" />
        <span className="border-x-[6px] border-b-[6px] border-x-transparent border-b-[#1e2022]" />
      </div>
      <div className="ml-[19px] flex w-[112px] shrink-0 flex-col items-center whitespace-nowrap text-[#1b1a1a]">
        <span className="mt-[3px] text-[27px] leading-[28px]">16.28</span>
        <span className="text-[21.500px] leading-[22px] tracking-[-0.1px]">13.12.2023</span>
      </div>
      <div className="ml-[20px] mt-[9px] flex h-[36px] w-[36px] shrink-0 items-end border-2 border-[#4c4440] px-[2px] pb-[2px]"><span className="h-[3px] w-full bg-[#83766e]" /></div>
    </div>
  );
}

export default function App() {
  return (
    <div className="relative flex h-[1080px] w-[1920px] flex-col overflow-hidden bg-[#d3d3d3] font-['Noto_Sans',sans-serif]">
      <div className="relative h-[1024px] w-full shrink-0 overflow-hidden">
        <LeftWindow />
        <div className="absolute left-[1818px] top-[980px] flex h-[25px] w-[84px] items-end gap-1 rounded-[2px] border border-[#8f8f8f] bg-[#d0d0d0] px-1 pb-[5px] text-[12px] leading-[12px] text-[#333]"><span className="h-2 w-[14px] bg-[#444]" />Esikatselu</div>
        <RightWindow />
        <svg viewBox="0 0 12 18" className="absolute left-[1779px] top-[797px] h-[20px] w-[13px]"><path d="M.7.7V14.500L4 11.500L6.500 17L9 16L6.700 10.700H11Z" fill="#26282a" stroke="#77797b" strokeWidth=".8" /></svg>
      </div>
      <Taskbar />
    </div>
  );
}
